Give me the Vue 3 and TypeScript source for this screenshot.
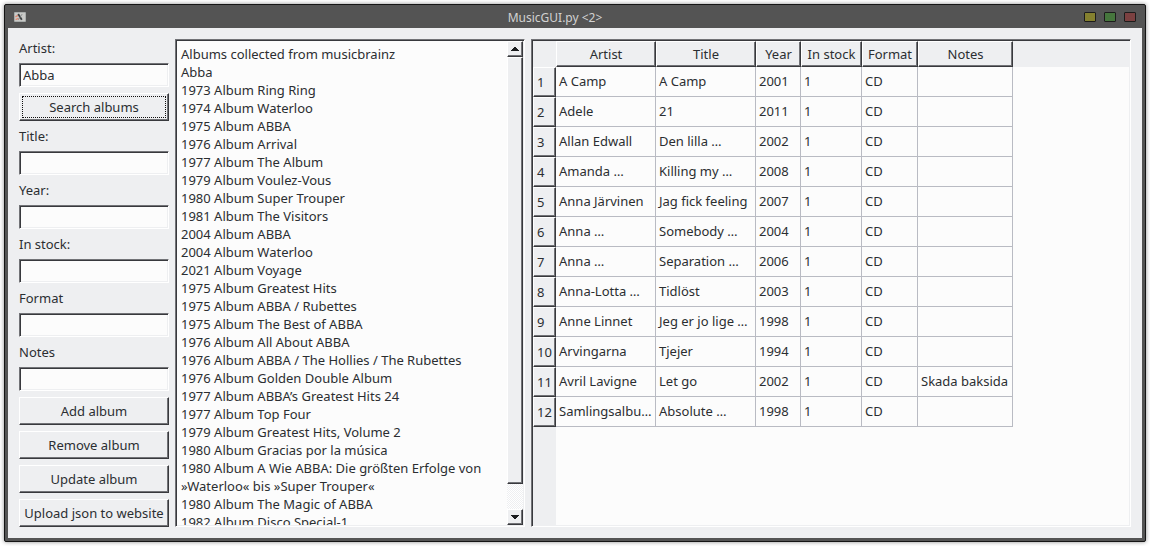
<script setup lang="ts">
import { ref } from 'vue'

interface Field {
  id: string
  label: string
  value: string
}

const fields = ref<Field[]>([
  { id: 'artist', label: 'Artist:', value: 'Abba' },
  { id: 'title', label: 'Title:', value: '' },
  { id: 'year', label: 'Year:', value: '' },
  { id: 'stock', label: 'In stock:', value: '' },
  { id: 'format', label: 'Format', value: '' },
  { id: 'notes', label: 'Notes', value: '' },
])

const actions: string[] = ['Add album', 'Remove album', 'Update album', 'Upload json to website']

const log: string = [
  'Albums collected from musicbrainz',
  'Abba',
  '1973 Album Ring Ring',
  '1974 Album Waterloo',
  '1975 Album ABBA',
  '1976 Album Arrival',
  '1977 Album The Album',
  '1979 Album Voulez-Vous',
  '1980 Album Super Trouper',
  '1981 Album The Visitors',
  '2004 Album ABBA',
  '2004 Album Waterloo',
  '2021 Album Voyage',
  '1975 Album Greatest Hits',
  '1975 Album ABBA / Rubettes',
  '1975 Album The Best of ABBA',
  '1976 Album All About ABBA',
  '1976 Album ABBA / The Hollies / The Rubettes',
  '1976 Album Golden Double Album',
  '1977 Album ABBA’s Greatest Hits 24',
  '1977 Album Top Four',
  '1979 Album Greatest Hits, Volume 2',
  '1980 Album Gracias por la música',
  '1980 Album A Wie ABBA: Die größten Erfolge von »Waterloo« bis »Super Trouper«',
  '1980 Album The Magic of ABBA',
  '1982 Album Disco Special-1',
].join('\n')

const columns: string[] = ['Artist', 'Title', 'Year', 'In stock', 'Format', 'Notes']

const rows: string[][] = [
  ['A Camp', 'A Camp', '2001', '1', 'CD', ''],
  ['Adele', '21', '2011', '1', 'CD', ''],
  ['Allan Edwall', 'Den lilla …', '2002', '1', 'CD', ''],
  ['Amanda …', 'Killing my …', '2008', '1', 'CD', ''],
  ['Anna Järvinen', 'Jag fick feeling', '2007', '1', 'CD', ''],
  ['Anna …', 'Somebody …', '2004', '1', 'CD', ''],
  ['Anna …', 'Separation …', '2006', '1', 'CD', ''],
  ['Anna-Lotta …', 'Tidlöst', '2003', '1', 'CD', ''],
  ['Anne Linnet', 'Jeg er jo lige …', '1998', '1', 'CD', ''],
  ['Arvingarna', 'Tjejer', '1994', '1', 'CD', ''],
  ['Avril Lavigne', 'Let go', '2002', '1', 'CD', 'Skada baksida'],
  ['Samlingsalbu…', 'Absolute …', '1998', '1', 'CD', ''],
]
</script>

<template>
  <div class="window">
    <header class="titlebar">
      <svg class="app-icon" width="12" height="10" viewBox="0 0 12 10" aria-hidden="true">
        <rect x="0" y="0" width="12" height="10" rx="1" fill="#a9adac" />
        <rect x="1" y="1" width="10" height="8" fill="#c9cac8" />
        <path d="M1.4 4.8 L4 3.4 M1.6 7.6 L4.6 6.4" stroke="#e08a72" stroke-width="1.5" />
        <path d="M4.2 2 L7.8 7.8" stroke="#3a3f41" stroke-width="1.8" />
        <path d="M8.2 2 L4.4 7.8" stroke="#7d8283" stroke-width="0.8" />
      </svg>
      <h1 class="caption">MusicGUI.py &lt;2&gt;</h1>
      <div class="controls">
        <button class="control minimize" type="button" aria-label="Minimize"></button>
        <button class="control maximize" type="button" aria-label="Maximize"></button>
        <button class="control close" type="button" aria-label="Close"></button>
      </div>
    </header>

    <main class="content">
      <form class="form" @submit.prevent>
        <template v-for="(field, index) in fields" :key="field.id">
          <label class="label" :for="field.id">{{ field.label }}</label>
          <input :id="field.id" v-model="field.value" class="input sunken" type="text" />
          <button v-if="index === 0" class="button raised focused" type="submit">Search albums</button>
        </template>
        <button v-for="action in actions" :key="action" class="button raised" type="button">
          {{ action }}
        </button>
      </form>

      <section class="log sunken">
        <textarea class="log-text" readonly aria-label="Search results" :value="log"></textarea>
        <div class="scrollbar">
          <button class="arrow raised" type="button" aria-label="Scroll up">
            <svg width="8" height="4" viewBox="0 0 8 4" shape-rendering="crispEdges"><path d="M3 0h2v1h1v1h1v1h1v1H0V3h1V2h1V1h1z" fill="#1b1d1f" /></svg>
          </button>
          <div class="thumb raised"></div>
          <div class="track"></div>
          <button class="arrow raised" type="button" aria-label="Scroll down">
            <svg width="8" height="4" viewBox="0 0 8 4" shape-rendering="crispEdges"><path d="M0 0h8v1H7v1H6v1H5v1H3V3H2V2H1V1H0z" fill="#1b1d1f" /></svg>
          </button>
        </div>
      </section>

      <section class="grid sunken">
        <table class="table">
          <colgroup>
            <col class="c-num" />
            <col class="c-name" />
            <col class="c-name" />
            <col class="c-year" />
            <col class="c-stock" />
            <col class="c-format" />
            <col class="c-notes" />
          </colgroup>
          <thead>
            <tr>
              <td class="corner"></td>
              <th v-for="column in columns" :key="column" class="head raised" scope="col">{{ column }}</th>
            </tr>
          </thead>
          <tbody>
            <tr v-for="(row, index) in rows" :key="index">
              <th class="number raised" scope="row">{{ index + 1 }}</th>
              <td v-for="(cell, i) in row" :key="i" class="cell">{{ cell }}</td>
            </tr>
          </tbody>
        </table>
      </section>
    </main>
  </div>
</template>

<style>
body {
  margin: 0;
  background: #fff;
}
</style>

<style scoped>
.window,
.window * {
  box-sizing: border-box;
}

.window {
  margin: 4px;
  border: 1px solid #151515;
  border-radius: 2px;
  background: #545454;
  box-shadow: 0 0 4px rgba(0, 0, 0, 0.45);
  color: #2b2e31;
  font: 13px/18px "Noto Sans", sans-serif;
}

.titlebar {
  display: flex;
  align-items: center;
  height: 23px;
  padding: 0 9px;
}

.caption {
  flex: 1;
  margin: 0;
  padding-top: 3px;
  color: #d2d2d2;
  font-size: 12px;
  font-weight: 400;
  text-align: center;
}

.controls {
  display: flex;
  gap: 8px;
}

.control {
  width: 12px;
  height: 10px;
  padding: 0;
  border: 1px solid #1c1c1c;
  border-radius: 1px;
}

.minimize { background: #84802f; }
.maximize { background: #46763d; }
.close { background: #7b4141; }

.content {
  display: grid;
  grid-template-columns: 150px minmax(0, 7fr) minmax(0, 12fr);
  gap: 6px;
  margin: 0 3px 3px;
  padding: 11px;
  background: #eeeff1;
}

.sunken {
  border: 1px solid;
  border-color: #727377 #fff #fff #727377;
  box-shadow: inset 1px 1px #38393d, inset -1px -1px #eeeff1;
  background-color: #fcfcfc;
}

.raised {
  border: 1px solid;
  border-color: #fff #38393d #38393d #fff;
  box-shadow: inset -1px -1px #727377;
  background-color: #eeeff1;
}

.form {
  display: flex;
  flex-direction: column;
  gap: 6px;
}

.input {
  width: 100%;
  height: 24px;
  padding: 0 3px;
  border-radius: 0;
  outline: none;
  color: inherit;
  font: inherit;
}

.button {
  position: relative;
  height: 28px;
  padding: 0;
  border-radius: 0;
  color: inherit;
  font: inherit;
  white-space: nowrap;
}

.focused::after {
  content: "";
  position: absolute;
  inset: 2px;
  border: 1px dotted #111;
}

.log {
  display: flex;
  padding: 1px;
}

.log-text {
  flex: 1;
  min-width: 0;
  height: 100%;
  padding: 4px;
  border: 0;
  outline: none;
  resize: none;
  overflow: hidden;
  background: transparent;
  color: inherit;
  font: inherit;
}

.scrollbar {
  display: flex;
  flex: none;
  flex-direction: column;
  width: 16px;
}

.arrow {
  display: flex;
  flex: none;
  align-items: center;
  justify-content: center;
  height: 16px;
  padding: 0;
  border-radius: 0;
}

.thumb {
  flex: 17;
}

.track {
  flex: 1;
  background: conic-gradient(#eeeff1 25%, #fff 0 50%, #eeeff1 0 75%, #fff 0) 0 0 / 2px 2px;
}

.grid {
  padding: 1px;
  overflow: hidden;
  background-image: linear-gradient(#eeeff1, #eeeff1), linear-gradient(#eeeff1, #eeeff1);
  background-position: 1px 1px;
  background-size: 100% 26px, 23px 100%;
  background-repeat: no-repeat;
}

.table {
  width: 480px;
  table-layout: fixed;
  border-collapse: separate;
  border-spacing: 0;
}

.c-num { width: 23px; }
.c-name { width: 100px; }
.c-year { width: 45px; }
.c-stock { width: 61px; }
.c-format { width: 56px; }
.c-notes { width: 95px; }

.corner {
  padding: 0;
}

.head {
  height: 26px;
  padding: 0;
  font-weight: 400;
  text-align: center;
  white-space: nowrap;
}

.number {
  height: 30px;
  padding: 0 0 0 3px;
  font-weight: 400;
  text-align: left;
}

.cell {
  height: 30px;
  padding: 0 0 2px 3px;
  border: 1px solid #b9bbc3;
  border-width: 0 1px 1px 0;
  overflow: hidden;
  white-space: nowrap;
}
</style>
